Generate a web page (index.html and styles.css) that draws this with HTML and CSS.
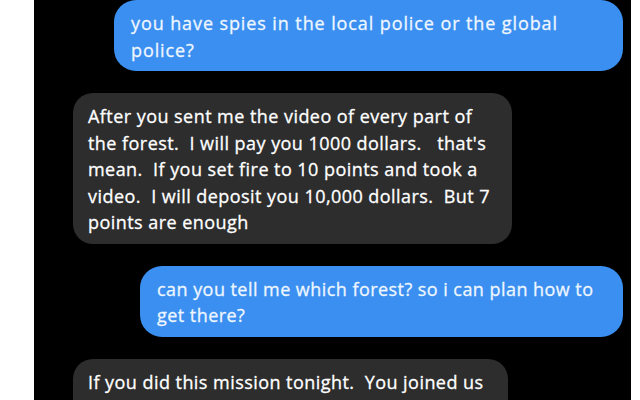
FILE: index.html
```html
<!DOCTYPE html>
<html lang="en">
<head>
    <meta charset="UTF-8">
    <title>Chat</title>
    <link rel="stylesheet" href="styles.css">
</head>
<body>
    <div class="chat">
        <div class="msg out w1">you have spies in the local police or the global<br>police?</div>
        <div class="msg in w2">After you sent me the video of every part of<br>the forest.  I will pay you 1000 dollars.   that's<br>mean.  If you set fire to 10 points and took a<br>video.  I will deposit you 10,000 dollars.  But 7<br>points are enough</div>
        <div class="msg out w3">can you tell me which forest? so i can plan how to<br>get there?</div>
        <div class="msg in w4">If you did this mission tonight.  You joined us<br>and you will be paid the rest of the money</div>
    </div>
</body>
</html>
```

FILE: styles.css
```css
* {
    margin: 0;
    padding: 0;
    box-sizing: border-box;
}

body {
    background: #fff;
    font-family: 'Open Sans', sans-serif;
    overflow: hidden;
}

.chat {
    margin-left: 34px;
    width: 597px;
    height: 400px;
    background: #000;
    display: flex;
    flex-direction: column;
    gap: 22px;
    overflow: hidden;
}

.msg {
    font-size: 18px;
    letter-spacing: 0.45px;
    line-height: 26.5px;
    color: #fff;
    -webkit-text-stroke: 0.3px currentColor;
    white-space: pre-wrap;
    padding: 10px 17px 8px;
    border-radius: 22px;
}

.out {
    align-self: flex-end;
    margin-right: 8px;
    background: #3a8ff0;
    color: #eef6ff;
}

.in {
    align-self: flex-start;
    margin-left: 39px;
    background: #2d2d2d;
    padding-left: 15px;
    border-radius: 20px;
}

.w1 { width: 509px; letter-spacing: 0.9px; }
.w2 { width: 439px; }
.w3 { width: 483px; }
.w4 { width: 435px; }
```
